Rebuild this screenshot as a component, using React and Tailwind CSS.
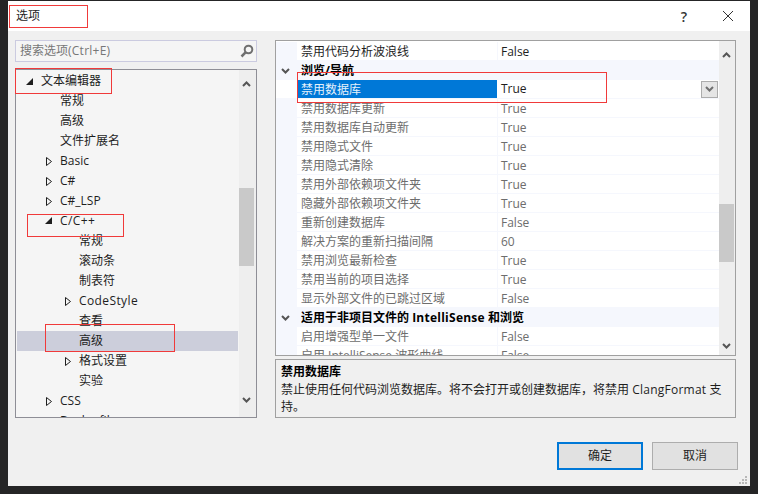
const font = "font-['Open_Sans','Noto_Sans_CJK_SC',sans-serif]";

function Tri({ open }) {
  return open ? (
    <svg width="7" height="7" viewBox="0 0 7 7" className="shrink-0">
      <polygon points="7,0 7,7 0,7" fill="#1e1e1e" />
    </svg>
  ) : (
    <svg width="6" height="9" viewBox="0 0 6 9" className="shrink-0">
      <polygon points="0.5,0.5 5.5,4.5 0.5,8.5" fill="none" stroke="#1e1e1e" />
    </svg>
  );
}

function Chevron({ up, color = "#555" }) {
  return (
    <svg width="9" height="6" viewBox="0 0 9 6">
      <polyline points={up ? "1,5 4.5,1.5 8,5" : "1,1 4.5,4.5 8,1"} fill="none" stroke={color} strokeWidth="2" />
    </svg>
  );
}

const tree = [
  { t: "常规", d: 2 },
  { t: "高级", d: 2 },
  { t: "文件扩展名", d: 2 },
  { t: "Basic", d: 1, a: "c" },
  { t: "C#", d: 1, a: "c" },
  { t: "C#_LSP", d: 1, a: "c" },
  { t: "C/C++", d: 1, a: "o", w: true },
  { t: "常规", d: 3 },
  { t: "滚动条", d: 3 },
  { t: "制表符", d: 3 },
  { t: "CodeStyle", d: 3, a: "c", w: true },
  { t: "查看", d: 3 },
  { t: "高级", d: 3, s: true },
  { t: "格式设置", d: 3, a: "c" },
  { t: "实验", d: 3 },
  { t: "CSS", d: 1, a: "c" },
  { t: "Dockerfile", d: 1, a: "c" },
];

const rowsA = [
  ["禁用数据库更新", "True"],
  ["禁用数据库自动更新", "True"],
  ["禁用隐式文件", "True"],
  ["禁用隐式清除", "True"],
  ["禁用外部依赖项文件夹", "True"],
  ["隐藏外部依赖项文件夹", "True"],
  ["重新创建数据库", "False"],
  ["解决方案的重新扫描间隔", "60"],
  ["禁用浏览最新检查", "True"],
  ["禁用当前的项目选择", "True"],
  ["显示外部文件的已跳过区域", "False"],
];

function Row({ name, value, dark }) {
  const c = dark ? "text-[#1e1e1e]" : "text-[#6d6d6d]";
  return (
    <div className="flex h-[19px] shrink-0 border-b border-[#f5f7fd]">
      <div className="w-[21px] shrink-0 bg-[#f5f7fd]" />
      <div className={`w-[201px] shrink-0 border-r border-[#f5f7fd] pl-1 leading-[20px] whitespace-nowrap ${c}`}>{name}</div>
      <div className={`pl-[3px] leading-[20px] ${c}`}>{value}</div>
    </div>
  );
}

function Section({ children }) {
  return (
    <div className="flex h-[19px] shrink-0 items-center bg-[#f5f7fd]">
      <div className="flex w-[21px] shrink-0 justify-center pr-[2px]"><Chevron /></div>
      <div className="pl-1 font-bold leading-[19px] text-black whitespace-nowrap">{children}</div>
    </div>
  );
}

function Box({ className }) {
  return <div className={`absolute border border-[#f03a3a] ${className}`} />;
}

export default function App() {
  return (
    <div className={`relative h-[494px] w-[758px] overflow-hidden bg-[#252526] pl-2 pt-px text-[12px] ${font}`}>
      <div className="flex h-[485px] w-[742px] flex-col bg-[#f0f0f0]">
        <div className="flex h-[30px] shrink-0 items-center justify-between bg-white pl-2 pr-4">
          <span className="text-[#1e1e1e]">选项</span>
          <div className="flex items-center gap-[35px]">
            <span className="text-[14px] font-semibold text-[#333]">?</span>
            <svg width="12" height="12" viewBox="0 0 12 12">
              <path d="M1 1 L11 11 M11 1 L1 11" stroke="#333" strokeWidth="1" fill="none" />
            </svg>
          </div>
        </div>

        <div className="flex gap-[18px] pl-[7px] pt-[9px]">
          <div className="flex w-[242px] shrink-0 flex-col gap-[7px]">
            <div className="flex h-[22px] items-center justify-between border border-[#cbcbe0] bg-[#f5f5f5] pl-1 pr-[2px] text-[#777]">
              <span>搜索选项<span className="tracking-[0.25px]">(Ctrl+E)</span></span>
              <svg width="14" height="14" viewBox="0 0 14 14">
                <circle cx="8.5" cy="5.5" r="3.8" fill="none" stroke="#707070" strokeWidth="2" />
                <path d="M5.8 8.2 L1.5 12.5" stroke="#707070" strokeWidth="2.5" />
              </svg>
            </div>
            <div className="flex h-[349px] border border-[#8e8e96] bg-[#f5f5f5]">
              <div className="flex min-w-0 flex-1 flex-col overflow-hidden pt-px">
                <div className="flex h-[20px] shrink-0 items-center gap-[8px] pl-[10px] text-[#1e1e1e]">
                  <Tri open />
                  <span>文本编辑器</span>
                </div>
                {tree.map((r, i) => (
                  <div
                    key={i}
                    className={`relative flex h-[20px] shrink-0 items-center whitespace-nowrap text-[#1e1e1e] ${r.s ? "mx-px bg-[#cccedb]" : ""}`}
                  >
                    {r.a && (
                      <span className={`absolute top-[6px] ${r.d === 1 ? (r.a === "o" ? "left-[29px]" : "left-[30px]") : "left-[49px]"}`}>
                        <Tri open={r.a === "o"} />
                      </span>
                    )}
                    <span className={`${r.d === 3 ? (r.s ? "pl-[62px]" : "pl-[63px]") : "pl-[44px]"} ${r.w ? "tracking-[0.4px]" : ""}`}>{r.t}</span>
                  </div>
                ))}
              </div>
              <div className="flex w-[17px] shrink-0 flex-col bg-[#eeeeee]">
                <div className="flex h-[17px] shrink-0 items-end justify-center pr-[2px]"><Chevron up /></div>
                <div className="ml-0 mt-[101px] h-[78px] w-[15px] bg-[#c9c9c9]" />
                <div className="flex flex-1 items-end justify-center pb-[14px] pr-[2px]"><Chevron /></div>
              </div>
            </div>
          </div>

          <div className="flex w-[461px] shrink-0 flex-col gap-[3px]">
            <div className="flex h-[316px] border border-[#a0a0a0] bg-white">
              <div className="flex min-w-0 flex-1 flex-col overflow-hidden pt-px">
                <Row name="禁用代码分析波浪线" value="False" dark />
                <Section>浏览/导航</Section>
                <div className="flex h-[19px] shrink-0 items-center border-b border-[#f5f7fd]">
                  <div className="w-[21px] shrink-0 bg-[#f5f7fd]" />
                  <div className="h-[18px] w-[200px] shrink-0 bg-[#0078d7] pl-1 leading-[20px] text-[#e6f1fb]">禁用数据库</div>
                  <div className="flex-1 pl-1 leading-[20px] text-[#1e1e1e]">True</div>
                  <div className="mr-px flex h-[17px] w-[17px] items-center justify-center border border-[#acacac] bg-[#e5e5e5]">
                    <Chevron color="#707070" />
                  </div>
                </div>
                {rowsA.map((r) => (
                  <Row key={r[0]} name={r[0]} value={r[1]} />
                ))}
                <Section>适用于非项目文件的 <span className="tracking-[0.25px]">IntelliSense</span> 和浏览</Section>
                <Row name="启用增强型单一文件" value="False" />
                <Row name="启用 IntelliSense 波形曲线" value="False" />
              </div>
              <div className="flex w-[16px] shrink-0 flex-col bg-[#eeeeee]">
                <div className="flex h-[17px] shrink-0 items-end justify-center pr-px"><Chevron up /></div>
                <div className="mt-[146px] h-[58px] w-[15px] bg-[#c9c9c9]" />
                <div className="flex flex-1 items-end justify-center pb-[6px] pr-px"><Chevron /></div>
              </div>
            </div>
            <div className="flex h-[59px] flex-col border border-[#a0a0a0] bg-[#f0f0f0] pl-[5px] pr-3 pt-[3px] text-[#1e1e1e]">
              <div className="font-bold leading-[18px] text-black">禁用数据库</div>
              <div className="leading-[17px]">禁止使用任何代码浏览数据库。将不会打开或创建数据库，将禁用 <span className="tracking-[0.25px]">ClangFormat</span> 支持。</div>
            </div>
          </div>
        </div>

        <div className="flex gap-[9px] pl-[549px] pt-[24px]">
          <button className="flex h-[28px] w-[86px] items-center justify-center border-2 border-[#0078d7] bg-[#e1e1e1] text-[#1e1e1e]">确定</button>
          <button className="flex h-[28px] w-[86px] items-center justify-center border border-[#adadad] bg-[#e1e1e1] text-[#1e1e1e]">取消</button>
        </div>

        <div className="flex flex-1 items-end justify-end pb-[2px] pr-[3px]">
          <svg width="8" height="8" viewBox="0 0 8 8">
            <path d="M6 0h2v2H6zM3 3h2v2H3zM6 3h2v2H6zM0 6h2v2H0zM3 6h2v2H3zM6 6h2v2H6z" fill="#b8b8b8" />
          </svg>
        </div>
      </div>

      <Box className="left-[9px] top-[5px] h-[23px] w-[79px]" />
      <Box className="left-[15px] top-[68px] h-[26px] w-[97px]" />
      <Box className="left-[27px] top-[214px] h-[23px] w-[97px]" />
      <Box className="left-[45px] top-[324px] h-[28px] w-[130px]" />
      <Box className="left-[297px] top-[72px] h-[31px] w-[310px]" />
    </div>
  );
}
